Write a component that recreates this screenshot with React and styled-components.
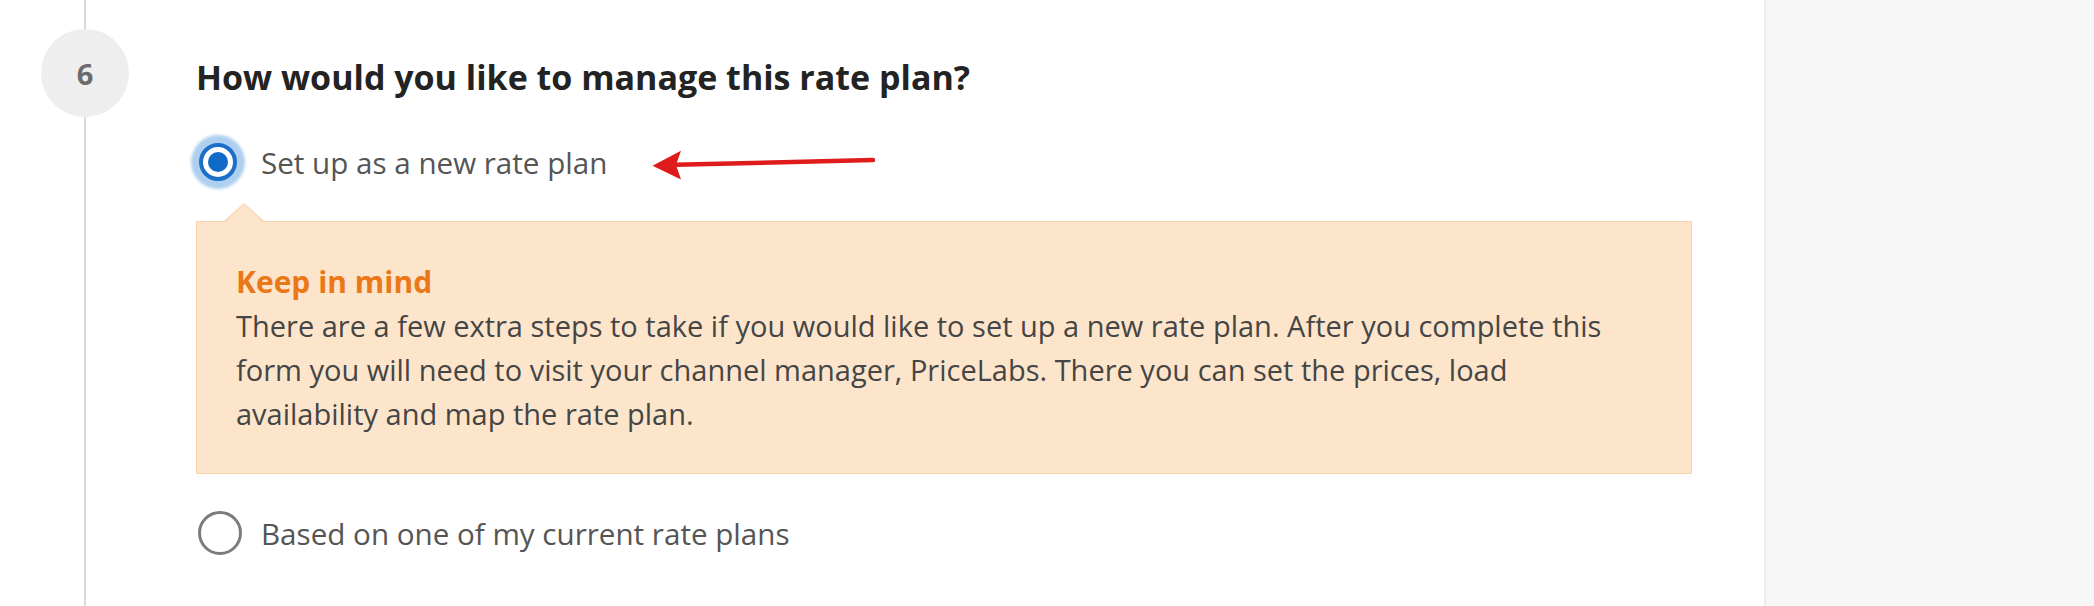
import React from "react";
import styled, { createGlobalStyle } from "styled-components";

const Global = createGlobalStyle`
  html, body { margin: 0; padding: 0; background: #ffffff; }
  body { font-family: "Open Sans", "Noto Sans", "Liberation Sans", sans-serif; }
  * { box-sizing: border-box; }
`;

const Page = styled.div`
  display: flex;
  width: 2094px;
  height: 606px;
  overflow: hidden;
`;

const Main = styled.div`
  display: flex;
  width: 1764px;
  background: #ffffff;
`;

const Sidebar = styled.aside`
  flex: 1;
  background: #f6f6f6;
  border-left: 2px solid #ececec;
`;

const Rail = styled.div`
  position: relative;
  width: 196px;
  flex: none;
  &::before {
    content: "";
    position: absolute;
    top: 0;
    bottom: 0;
    left: 84px;
    width: 2px;
    background: #dadada;
  }
`;

const StepBadge = styled.div`
  position: relative;
  margin: 29px 0 0 41px;
  width: 88px;
  height: 88px;
  border-radius: 50%;
  background: #eeeeee;
  display: flex;
  align-items: center;
  justify-content: center;
  font-size: 29px;
  font-weight: 700;
  color: #6b6b6b;
`;

const Content = styled.div`
  width: 1496px;
  padding-top: 57px;
`;

const Question = styled.h2`
  margin: 0;
  font-size: 34px;
  line-height: 40px;
  font-weight: 700;
  color: #232323;
  white-space: nowrap;
`;

const OptionRow = styled.label`
  display: flex;
  align-items: center;
  height: 54px;
  margin-top: ${(p) => p.$mt}px;
`;

const RadioSlot = styled.span`
  width: 48px;
  height: 54px;
  flex: none;
  display: flex;
  align-items: center;
  justify-content: center;
`;

const RadioOn = styled.span`
  width: 38px;
  height: 38px;
  border-radius: 50%;
  border: 4px solid #1b6fc8;
  background: #ffffff;
  display: flex;
  align-items: center;
  justify-content: center;
  box-shadow: 0 0 3px 8px rgba(120, 175, 230, 0.6);
  margin-left: -5px;
  &::after {
    content: "";
    width: 20px;
    height: 20px;
    border-radius: 50%;
    background: #0f6ac8;
  }
`;

const RadioOff = styled.span`
  width: 44px;
  height: 44px;
  border-radius: 50%;
  border: 3px solid #7c7c7c;
  background: #ffffff;
`;

const OptionLabel = styled.span`
  margin-left: 17px;
  font-size: 29.6px;
  color: #555555;
  white-space: nowrap;
`;

const Arrow = styled.svg`
  align-self: flex-start;
  margin-top: 14px;
  margin-left: 44px;
  flex: none;
`;

const Callout = styled.div`
  position: relative;
  margin-top: 32px;
  background: #fde5cc;
  border: 1px solid #f9d3a9;
  padding: 38px 38px 37px 39px;
  &::before {
    content: "";
    position: absolute;
    top: -19px;
    left: 26px;
    border-left: 21px solid transparent;
    border-right: 21px solid transparent;
    border-bottom: 19px solid #f9d3a9;
  }
  &::after {
    content: "";
    position: absolute;
    top: -18px;
    left: 27px;
    border-left: 20px solid transparent;
    border-right: 20px solid transparent;
    border-bottom: 19px solid #fde5cc;
  }
`;

const CalloutTitle = styled.div`
  font-size: 30px;
  line-height: 44px;
  font-weight: 700;
  color: #ea7819;
`;

const CalloutText = styled.p`
  margin: 0;
  font-size: 29px;
  line-height: 44px;
  color: #454545;
  white-space: nowrap;
`;

export default function App() {
  return (
    <>
      <Global />
      <Page>
        <Main>
          <Rail>
            <StepBadge>6</StepBadge>
          </Rail>
          <Content>
            <Question>How would you like to manage this rate plan?</Question>
            <OptionRow $mt={38}>
              <RadioSlot>
                <RadioOn />
              </RadioSlot>
              <OptionLabel>Set up as a new rate plan</OptionLabel>
              <Arrow width="224" height="32" viewBox="0 0 224 32">
                <line x1="24" y1="15.8" x2="222" y2="11" stroke="#e01b1b" strokeWidth="4.5" strokeLinecap="round" />
                <polygon points="1.5,16.7 30,1.7 25,16 30,30.5" fill="#e01b1b" />
              </Arrow>
            </OptionRow>
            <Callout>
              <CalloutTitle>Keep in mind</CalloutTitle>
              <CalloutText>
                There are a few extra steps to take if you would like to set up a new rate plan. After you complete this
                <br />
                form you will need to visit your channel manager, PriceLabs. There you can set the prices, load
                <br />
                availability and map the rate plan.
              </CalloutText>
            </Callout>
            <OptionRow $mt={32}>
              <RadioSlot>
                <RadioOff />
              </RadioSlot>
              <OptionLabel>Based on one of my current rate plans</OptionLabel>
            </OptionRow>
          </Content>
        </Main>
        <Sidebar />
      </Page>
    </>
  );
}
